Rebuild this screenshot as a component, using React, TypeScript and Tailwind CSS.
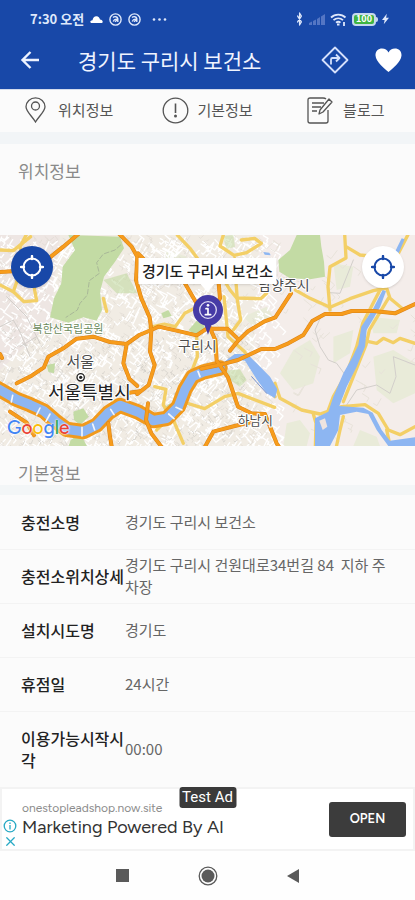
import React from "react";
import { Bluetooth, X } from "lucide-react";

const details = [
  { label: "충전소명", value: "경기도 구리시 보건소" },
  { label: "충전소위치상세", value: "경기도 구리시 건원대로34번길 84  지하 주차장" },
  { label: "설치시도명", value: "경기도" },
  { label: "휴점일", value: "24시간" },
  { label: "이용가능시작시각", value: "00:00", tall: true },
];

// Deterministic noise so that the small streets are the same on every load.
function makeRandom(seed: number) {
  let s = seed;
  return () => {
    s = (s * 16807) % 2147483647;
    return s / 2147483647;
  };
}

function streets(seed: number, count: number, x0: number, x1: number, y0: number, y1: number, size: number) {
  const rnd = makeRandom(seed);
  let d = "";
  for (let i = 0; i < count; i++) {
    const x = Math.round(x0 + rnd() * (x1 - x0));
    const y = Math.round(y0 + rnd() * (y1 - y0));
    const a = (rnd() < 0.5 ? 0.4 : 1.95) + rnd() * 0.5;
    const l = size * (0.4 + rnd());
    const dx = Math.round(Math.cos(a) * l);
    const dy = Math.round(Math.sin(a) * l);
    d += `M${x} ${y}l${dx} ${dy}l${Math.round(-dy / 2)} ${Math.round(dx / 2)}`;
  }
  return d;
}

const cityWhite = streets(11, 1100, 0, 840, 15, 650, 26);
const cityGrey = streets(77, 800, 0, 780, 15, 650, 13);
const cityDots = streets(401, 500, 0, 740, 300, 650, 9);
const hills = streets(909, 70, 780, 1245, 15, 650, 26);

const river =
  "M-20 468L50 508L90 524L130 542L165 572L200 598L250 605L290 585L325 548L360 526L414 546L460 572L500 565L535 530L555 478L578 440L610 426L660 414";

const motorways = [
  "M235 12L190 50L150 82L100 120L0 126",
  "M358 12L395 50L412 80L408 150L424 205L449 262L454 300L450 365L464 405L446 465L412 492",
  "M414 70L430 86",
  "M50 460L95 437L132 412L145 380L190 355L230 326L280 320L330 336L380 342L418 315L454 300L476 290L530 302L590 316L620 296L682 296L712 325",
  "M380 342L370 400L388 446L412 468",
  "M0 372L6 384",
  "M552 155L584 210L620 272L646 330L650 392L684 442L714 530L754 550L795 552L830 640L840 655",
  "M656 160L660 205L626 262",
  "M612 655L640 605L704 588L754 576",
  "M690 362L714 332L744 304L794 274L826 262L873 190",
  "M604 416L654 406L714 390L784 357L825 357L865 340L910 315L937 273L975 252L1025 252L1055 243L1120 243L1185 250L1245 222",
  "M444 520L438 570L454 610L488 655",
  "M30 545L80 578L102 616",
  "M325 580L330 620L336 655",
  "M388 488L420 484",
];

const yellowRoads = [
  "M80 12L60 50L64 80",
  "M0 165L40 185L72 215L110 212L102 170",
  "M0 60L40 62L92 20",
  "M40 185L52 150",
  "M310 205L320 244",
  "M450 292L492 282L526 290L554 250L584 235",
  "M532 15L570 55L592 85",
  "M724 30L764 25L784 40L740 68L702 76L660 48L670 15",
  "M660 130L690 180L710 204L782 206L800 190",
  "M704 85L706 130L712 210L722 270L700 300",
  "M672 200L684 320L734 365L760 420L825 500",
  "M590 320L592 380L572 432",
  "M464 470L498 478L490 525L520 570L550 640",
  "M550 516L614 536L674 500L714 490L824 532",
  "M510 560L470 600",
  "M886 180L930 205L990 232L1050 206L1120 182L1160 174L1170 205L1205 234",
  "M990 240L984 170L990 110L1038 84L1034 12",
  "M1038 50L1080 75L1110 78",
  "M1225 12L1190 80L1140 180L1088 280L1070 350L1040 430L1000 500L985 540",
  "M1165 205L1108 300L1098 345L1060 440L1030 515",
  "M1092 332L1130 340L1150 325L1180 338L1200 325L1245 340",
  "M825 460L840 505L905 540L960 552L1025 530L1095 524L1135 550L1165 600L1200 614L1245 590",
  "M940 552L948 580L946 655",
  "M1030 560L1020 600L1008 655",
  "M1160 600L1172 655",
];

function MapCanvas() {
  return (
    <svg
      className="block h-full w-full"
      viewBox="0 15 1245 633"
      preserveAspectRatio="xMidYMid slice"
      role="img"
      aria-label="지도"
      fill="none"
      strokeLinejoin="round"
      strokeLinecap="round"
    >
      <rect y="0" width="1245" height="660" fill="#f1ece4" />
      <path d="M0 15H180L150 280L0 420Z" fill="#eee6e3" />
      <path d="M780 0H1245V660H830L760 400Z" fill="#f4edea" />
      <g fill="#e9ebd9">
        <path d="M880 360L930 330L960 380L940 460L880 480L840 430Z" />
        <path d="M1000 320L1060 300L1050 370L1000 400Z" />
        <path d="M1120 380L1180 360L1245 400V490L1180 520L1130 480Z" />
        <path d="M1110 260L1200 270L1190 310L1120 310Z" />
        <path d="M860 580L900 570L930 610L920 648H850Z" />
        <path d="M1080 600L1130 620L1140 648H1060Z" />
        <path d="M730 260L800 230L820 260L760 290Z" />
        <path d="M1000 100L1060 110L1050 170L1010 180Z" />
        <path d="M500 60L560 80L540 140L490 120Z" />
      </g>
      <path d={cityWhite} stroke="#ffffff" strokeWidth="4" />
      <path d={cityGrey} stroke="#dfdad2" strokeWidth="2" />
      <path d={cityDots} stroke="#cfccc6" strokeWidth="2" />
      <path d={hills} stroke="#e8e3da" strokeWidth="3" />
      <g fill="#c3dba4">
        <path d="M205 15L360 20L372 55L345 95L312 140L300 185L306 240L290 272L250 262L205 278L150 262L162 205L184 160L188 110L225 60Z" />
        <path d="M835 90L870 60L890 15H960L964 50L972 95L975 140L930 148L870 145L838 125Z" />
        <path d="M566 300L590 272L615 284L610 305L580 312Z" />
        <path d="M220 545L250 535L266 560L240 585L222 570Z" />
        <path d="M140 405L165 400L162 430L145 425Z" />
        <path d="M310 150L380 130L412 190L350 190Z" opacity=".6" />
        <path d="M484 250L505 240L515 258L490 265Z" />
        <path d="M490 535L510 520L520 540L500 556Z" />
        <path d="M676 422L720 418L740 450L720 470L690 450Z" opacity=".6" />
        <path d="M212 630L240 610L262 650H205Z" />
        <path d="M668 18L700 15L705 50L680 58Z" opacity=".5" />
      </g>
      <path d="M362 45L345 60L310 72L290 98L298 130L268 152L262 195L240 220L232 240L198 262" stroke="#a9b898" strokeWidth="3" strokeDasharray="14 7" />
      <g stroke="#d3cfcb" strokeWidth="3">
        <path d="M965 255L945 300L960 350L985 390L1010 400L1032 430" />
        <path d="M1030 540L1070 480L1130 465L1170 490L1188 440L1180 380L1245 405" />
        <path d="M1060 90L1020 190L990 188" />
        <path d="M0 290L40 270L62 310L90 380M20 200L80 260L120 340M110 320L60 350" />
      </g>

      <g stroke="#f3cf66" strokeWidth="10">
        {yellowRoads.map((d) => (
          <path key={d} d={d} />
        ))}
      </g>

      <path d={river} stroke="#f19a1d" strokeWidth="46" />
      <path d={river} stroke="#8db6f2" strokeWidth="28" />
      <g fill="#8db6f2">
        <path d="M664 402L704 372L742 372L770 400L810 440L832 478L825 505L800 490L770 448L735 392L705 388L672 408Z" />
        <path d="M945 565L985 545L1000 500L1030 430L1058 380L1075 345L1084 290L1120 235L1148 180L1158 184L1140 232L1100 300L1095 350L1070 410L1040 470L1018 528L1090 533L1118 548L1145 600L1170 632L1245 622V648H1165L1130 600L1105 552L1070 545L1020 555L1015 600L990 648H945Z" />
        <path d="M1185 65L1205 25L1214 28L1196 70Z" />
        <path d="M790 66L808 68L812 76L794 74Z" />
      </g>
      <path d="M958 572L975 565L982 590L968 600Z" fill="#eee4e0" />
      <path d="M755 440L800 490" stroke="#718fcf" strokeWidth="3" />
      <path
        d="M38 496L34 516M120 534L110 554M150 552L138 574M246 592V618M278 582L284 600M332 538L342 554M506 552L522 566M528 532L546 540M594 424L600 440"
        stroke="#f4f6fb"
        strokeWidth="5"
      />

      <g stroke="#d98219" strokeWidth="12">
        {motorways.map((d) => (
          <path key={d} d={d} />
        ))}
      </g>
      <g stroke="#f79c1c" strokeWidth="9">
        {motorways.map((d) => (
          <path key={d} d={d} />
        ))}
      </g>

      <g
        fontFamily="'Noto Sans CJK KR', sans-serif"
        textAnchor="middle"
        stroke="#ffffff"
        strokeWidth="6"
        paintOrder="stroke"
      >
        <text x="204" y="308" fontSize="33" fill="#6b8a5b">북한산국립공원</text>
        <text x="241" y="410" fontSize="45" fill="#4d4d4d">서울</text>
        <text x="268" y="506" fontSize="54" fill="#222222">서울특별시</text>
        <text x="592" y="362" fontSize="42" fill="#4d4d4d">구리시</text>
        <text x="766" y="586" fontSize="38" fill="#4d4d4d">하남시</text>
        <text x="852" y="181" fontSize="42" fill="#4d4d4d">남양주시</text>
      </g>
      <circle cx="242" cy="442" r="11" fill="#ffffff" stroke="#222222" strokeWidth="4" />
      <circle cx="242" cy="442" r="5" fill="#222222" />

      <path d="M624 314L614 286C594 280 579 263 579 240A45 45 0 0 1 669 240C669 263 654 280 634 286Z" fill="#463ba6" />
      <circle cx="624" cy="240" r="25" stroke="#dcd9f2" strokeWidth="4" />
      <path d="M618 236H624V253M616 254H632" stroke="#ffffff" strokeWidth="5" />
      <circle cx="624" cy="226" r="4" fill="#ffffff" />
    </svg>
  );
}

function Crosshair() {
  return (
    <svg className="size-6" viewBox="0 0 24 24" fill="none" stroke="currentColor" strokeWidth="2" strokeLinecap="round" aria-hidden="true">
      <circle cx="12" cy="12" r="8.500" />
      <path d="M12 1v3M12 20v3M1 12h3M20 12h3" strokeWidth="2.400" />
    </svg>
  );
}

function StatusBar() {
  return (
    <div className="flex h-[38px] items-center px-[30px] text-[#dfe8fb]">
      <span className="text-[13px] font-bold">7:30 오전</span>
      <svg className="ml-[6px] h-[7px] w-[13px]" viewBox="0 0 13 7" fill="#ffffff" aria-hidden="true">
        <path d="M1 7C-.5 6 .6 4.200 2.500 4.300C3 1.500 4.500 .2 6.500 .3C8.400 .4 9.600 1.700 10 3.600C12.500 3.800 13.500 6 12 7Z" />
      </svg>
      {[0, 1].map((n) => (
        <svg key={n} className="ml-[6px] size-[13px]" viewBox="0 0 13 13" fill="none" stroke="currentColor" strokeWidth="1.400" aria-hidden="true">
          <circle cx="6.500" cy="6.500" r="5.600" />
          <path d="M4 4.500C5.500 3 8.500 3.500 8.800 5.600V9M8.800 6.500C7 5.800 5 6.600 4.200 8.500M6 8.800L9 6" />
        </svg>
      ))}
      <svg className="ml-[11px] h-[3px] w-[15px]" viewBox="0 0 15 3" fill="currentColor" aria-hidden="true">
        <circle cx="2" cy="1.500" r="1.300" />
        <circle cx="7.500" cy="1.500" r="1.300" />
        <circle cx="13" cy="1.500" r="1.300" />
      </svg>
      <div className="-mr-[4px] ml-auto flex items-center gap-[5px]">
        <Bluetooth className="h-[14px] w-[9px]" strokeWidth={3} preserveAspectRatio="none" aria-hidden="true" />
        <svg className="h-[12px] w-[16px]" viewBox="0 0 16 12" fill="#6482ca" aria-hidden="true">
          <path d="M0 12V10L3 8.500V12ZM4 12V8L7 6.500V12ZM8 12V6L11 4V12ZM12 12V3.500L16 1V12Z" opacity=".8" />
        </svg>
        <svg className="h-[13px] w-[17px]" viewBox="0 0 17 13" fill="none" stroke="currentColor" strokeWidth="1.800" aria-hidden="true">
          <path d="M1 4.500C5 .6 11.500 .6 15.500 4.500M3.500 7.200C6.300 4.700 10.200 4.700 13 7.200M6 9.600C7.500 8.400 9 8.400 10.500 9.600" />
          <path d="M7 11.500h2.500M14 9v4" />
        </svg>
        <span className="flex items-center">
          <span className="flex h-[13px] w-[24px] items-center justify-center rounded-[4px] border-2 border-[#c5d9ee] bg-[#3fb543] text-[9px] font-bold text-white">
            100
          </span>
          <span className="h-[5px] w-[2px] rounded-r-sm bg-[#c5d9ee]" />
        </span>
        <svg className="-ml-px h-[12px] w-[7px]" viewBox="0 0 8 12" fill="currentColor" aria-hidden="true">
          <path d="M5.500 0L0 7H3L2 12L8 4.600H4.700Z" />
        </svg>
      </div>
    </div>
  );
}

function AppHeader() {
  return (
    <div className="flex h-[51px] items-center pr-[13px] pb-[8px] pl-[20px] text-white">
      <button type="button" aria-label="뒤로">
        <svg className="block h-[18px] w-[20px]" viewBox="0 0 20 18" fill="none" stroke="#eef3ff" strokeWidth="2.400" aria-hidden="true">
          <path d="M19 9H3M10.500 1L2.500 9L10.500 17" />
        </svg>
      </button>
      <h1 className="ml-[38px] text-[21px] leading-[28px] text-[#f0f4ff]">경기도 구리시 보건소</h1>
      <button type="button" aria-label="길찾기" className="ml-auto">
        <svg className="block size-[28px]" viewBox="0 0 28 28" fill="none" stroke="#d5e0fb" strokeWidth="1.800" strokeLinejoin="round" aria-hidden="true">
          <path d="M14 1.500L26.500 14L14 26.500L1.500 14Z" />
          <path d="M10 18.500V13.500Q10 12 11.500 12H18M15 8.500L18.500 12L15 15.500" />
        </svg>
      </button>
      <button type="button" aria-label="즐겨찾기" className="ml-[26px]">
        <svg className="block h-[24px] w-[27px]" viewBox="0 0 27 24" fill="#ffffff" aria-hidden="true">
          <path d="M13.500 24C9 20 1 14 .5 7.500C.3 3 3.500 .5 7 .5C10 .5 12.300 2 13.500 4.500C14.700 2 17 .5 20 .5C23.500 .5 26.700 3 26.500 7.500C26 14 18 20 13.500 24Z" />
        </svg>
      </button>
    </div>
  );
}

function Tabs() {
  const link = "flex items-center justify-center text-[15px] leading-[22px] text-[#555555]";
  return (
    <nav className="grid h-[43px] grid-cols-3 border-t border-[#d3dbec] bg-[#fbfbfb] pb-[2px]">
      <a href="#location" className={link}>
        <svg className="mr-[12px] h-[26px] w-[21px]" viewBox="0 0 21 26" fill="none" stroke="#555555" strokeWidth="1.300" aria-hidden="true">
          <path d="M10.500 25C7 19 1 14.500 1 9.800A9.500 9 0 0 1 20 9.800C20 14.500 14 19 10.500 25Z" />
          <circle cx="10.500" cy="9" r="4" />
        </svg>
        위치정보
      </a>
      <a href="#basic" className={link}>
        <svg className="mr-[8px] size-[27px]" viewBox="0 0 27 27" fill="none" stroke="#555555" strokeWidth="1.300" aria-hidden="true">
          <circle cx="13.500" cy="13.500" r="12.300" />
          <path d="M13.500 6.500V16" strokeWidth="1.600" />
          <circle cx="13.500" cy="19" r="1.500" fill="#555555" stroke="none" />
        </svg>
        기본정보
      </a>
      <a href="#blog" className={link}>
        <svg className="mr-[10px] h-[27px] w-[26px]" viewBox="0 0 26 27" fill="none" stroke="#555555" strokeWidth="1.300" strokeLinejoin="round" aria-hidden="true">
          <path d="M19 2Q18 1 16 1H3Q1 1 1 3V24Q1 26 3 26H19Q21 26 21 24V13" />
          <path d="M22 2L25 5L16 15L12 17L13 13Z" />
          <path d="M5 6H17M5 10H14M5 14H10" />
        </svg>
        블로그
      </a>
    </nav>
  );
}

function AdBanner() {
  return (
    <aside className="relative flex h-[64px] items-center border-2 border-[#f3f3f3] bg-white pr-[7px] font-[Figtree,Inter,'Open_Sans',sans-serif]">
      <div className="mt-[30px] flex w-[16px] flex-col items-center gap-px text-[#27a9c4]">
        <svg className="size-[14px]" viewBox="0 0 14 14" fill="none" stroke="currentColor" strokeWidth="1.300" aria-hidden="true">
          <circle cx="7" cy="7" r="5.800" />
          <path d="M7 6V10.500M7 3.500V5" />
        </svg>
        <button type="button" aria-label="광고 닫기">
          <X className="block size-[15px]" strokeWidth={2} aria-hidden="true" />
        </button>
      </div>
      <div className="ml-[4px]">
        <p className="text-[12px] leading-[16px] text-[#8c8c8c]">onestopleadshop.now.site</p>
        <p className="text-[18px] leading-[22px] text-[#333333]">Marketing Powered By AI</p>
      </div>
      <button type="button" className="ml-auto h-[35px] w-[77px] rounded-[3px] bg-[#3c3c3c] text-[13px] font-semibold text-white">
        OPEN
      </button>
      <span className="absolute -top-[2px] left-1/2 flex h-[21px] w-[57px] -translate-x-1/2 items-center justify-center rounded-[3px] bg-[#3a3a3a] font-[Roboto,sans-serif] text-[15px] whitespace-nowrap text-white">
        Test Ad
      </span>
    </aside>
  );
}

export default function App() {
  return (
    <div className="flex min-h-screen flex-col bg-[#fbfbfb] font-['Noto_Sans_CJK_KR',sans-serif]">
      <header className="bg-[#1848a8]">
        <StatusBar />
        <AppHeader />
      </header>
      <Tabs />
      <main className="flex-1">
        <section id="location" className="border-t-12 border-[#f2f5f7]">
          <h2 className="px-[18px] pt-[15px] pb-[52px] text-[17px] leading-[24px] text-[#8a8a8a]">위치정보</h2>
          <div className="relative h-[211px] overflow-hidden">
            <MapCanvas />
            <div className="absolute top-[23px] left-1/2 -translate-x-1/2 bg-white px-[4px] text-[15px] leading-[26px] font-medium whitespace-nowrap text-[#222222] shadow-sm">
              경기도 구리시 보건소
              <svg className="absolute top-full left-1/2 h-[8px] w-[14px] -translate-x-1/2" viewBox="0 0 14 8" fill="#ffffff" aria-hidden="true">
                <path d="M0 0H14L7 8Z" />
              </svg>
            </div>
            <button type="button" aria-label="충전소 위치로 이동" className="absolute top-[11px] left-[11px] flex size-[42px] items-center justify-center rounded-full bg-[#1848a8] text-white shadow">
              <Crosshair />
            </button>
            <button type="button" aria-label="내 위치로 이동" className="absolute top-[11px] right-[11px] flex size-[42px] items-center justify-center rounded-full bg-white text-[#1848a8] shadow">
              <Crosshair />
            </button>
            <span className="absolute bottom-[4px] left-[7px] flex font-[Figtree,Lato,sans-serif] text-[19px] leading-[28px] font-medium [text-shadow:0_0_2px_white,0_0_2px_white]">
              <span className="text-[#4285f4]">G</span>
              <span className="text-[#ea4335]">o</span>
              <span className="text-[#fbbc05]">o</span>
              <span className="text-[#4285f4]">g</span>
              <span className="text-[#34a853]">l</span>
              <span className="text-[#ea4335]">e</span>
            </span>
          </div>
        </section>
        <section id="basic">
          <h2 className="border-b-10 border-[#f3f6f7] px-[18px] pt-[15px] text-[17px] leading-[24px] text-[#8a8a8a]">기본정보</h2>
          <table className="w-full table-fixed border-collapse text-left">
            <tbody>
              {details.map((row) => (
                <tr key={row.label} className={row.tall ? "h-[75px]" : "h-[54px] border-b border-[#f3f3f3]"}>
                  <th scope="row" className="w-[125px] pl-[21px] text-[16px] leading-[22px] font-medium text-[#222222]">
                    {row.label}
                  </th>
                  <td className="pr-[20px] text-[15px] leading-[22px] whitespace-pre-wrap text-[#666666]">{row.value}</td>
                </tr>
              ))}
            </tbody>
          </table>
        </section>
      </main>
      <AdBanner />
      <footer className="flex h-[49px] items-center justify-center gap-[69px] bg-[#fefefe] text-[#5a5a5a]">
        <button type="button" aria-label="최근 앱">
          <span className="block size-[13px] bg-current" />
        </button>
        <button type="button" aria-label="홈">
          <svg className="block size-[20px]" viewBox="0 0 20 20" fill="currentColor" aria-hidden="true">
            <circle cx="10" cy="10" r="6.500" />
            <circle cx="10" cy="10" r="8.800" fill="none" stroke="currentColor" strokeWidth="1.300" />
          </svg>
        </button>
        <button type="button" aria-label="이전">
          <svg className="block h-[14px] w-[12px]" viewBox="0 0 12 14" fill="currentColor" aria-hidden="true">
            <path d="M12 0V14L0 7Z" />
          </svg>
        </button>
      </footer>
    </div>
  );
}
